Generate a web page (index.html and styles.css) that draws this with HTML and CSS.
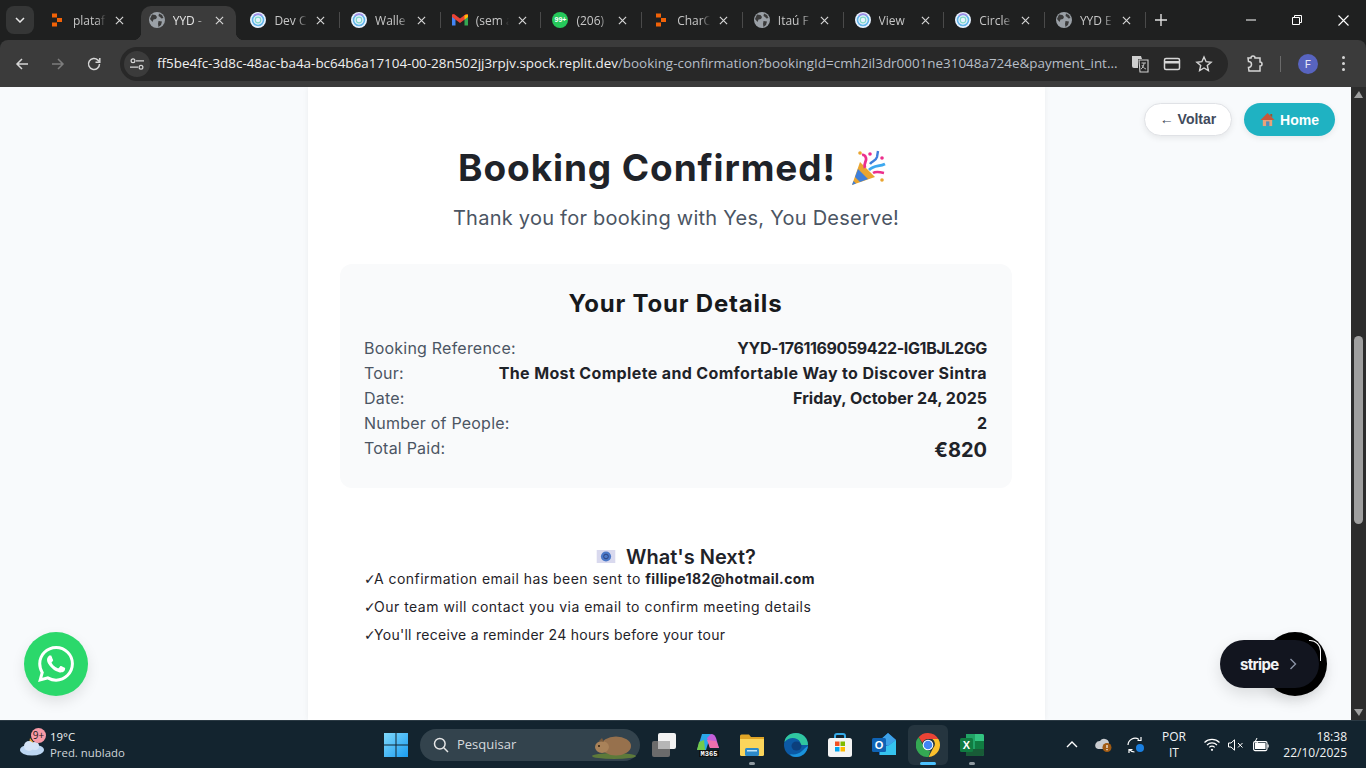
FILE: index.html
```html
<!DOCTYPE html>
<html lang="en">
<head>
    <meta charset="UTF-8">
    <meta name="viewport" content="width=device-width, initial-scale=1.0">
    <title>Booking Confirmed</title>
    <link rel="stylesheet" href="styles.css">
</head>
<body>
    <svg class="defs" width="0" height="0">
        <symbol id="i-close" viewBox="0 0 10 10"><path d="M1 1l8 8M9 1l-8 8" stroke="#d6d6d6" stroke-width="1.3" fill="none"/></symbol>
        <symbol id="i-globe" viewBox="0 0 16 16"><circle cx="8" cy="8" r="8" fill="#9aa0a6"/><path d="M3 2.500l3.500.5 1.500 2-1 2-2.500.5-1 2.500-2.500-3zM10 1.500l3 1.500 1.500 3-2 .5-1.500-1.500-1.500-1zM9.500 9l3.500.5-1 3.500-2.500 2-.5-3z" fill="#3b3b3b"/></symbol>
        <symbol id="i-circle" viewBox="0 0 16 16"><circle cx="8" cy="8" r="8" fill="#e8f2ff"/><circle cx="8" cy="8" r="5.500" fill="none" stroke="#62b5ea" stroke-width="1.600"/><path d="M4 3.800a5.500 5.500 0 0 1 8-.2" fill="none" stroke="#a78be8" stroke-width="1.600"/><circle cx="8" cy="8" r="2.800" fill="none" stroke="#7fd8c8" stroke-width="1.200"/></symbol>
        <symbol id="i-replit" viewBox="0 0 16 16"><path d="M3 1.500h5v4H3zM8 6h5v4H8zM3 10.500h5v4H3z" fill="#f26207"/></symbol>
    </svg>

    <div class="tabstrip">
        <button class="tab-search"><svg width="10" height="6" viewBox="0 0 10 6"><path d="M1 1l4 4 4-4" stroke="#e8e8e8" stroke-width="1.500" fill="none"/></svg></button>
        <div class="tabs">
            <div class="tab no-sep"><svg class="favicon"><use href="#i-replit"/></svg><span class="tab-title">plataf</span><svg class="tab-x"><use href="#i-close"/></svg></div>
            <div class="tab active"><svg class="favicon"><use href="#i-globe"/></svg><span class="tab-title">YYD -</span><svg class="tab-x"><use href="#i-close"/></svg></div>
            <div class="tab"><svg class="favicon"><use href="#i-circle"/></svg><span class="tab-title">Dev C</span><svg class="tab-x"><use href="#i-close"/></svg></div>
            <div class="tab"><svg class="favicon"><use href="#i-circle"/></svg><span class="tab-title">Walle</span><svg class="tab-x"><use href="#i-close"/></svg></div>
            <div class="tab"><svg class="favicon" viewBox="0 0 16 16"><path d="M0 4v9.500h3.500V7z" fill="#4285f4"/><path d="M16 4v9.500h-3.500V7z" fill="#34a853"/><path d="M0 2.500v2.500l8 6 8-6V2.500l-2-.5-6 4.500L2 2z" fill="#ea4335"/><path d="M12.500 3.200L16 2.500V5l-3.500 2.600z" fill="#fbbc04"/></svg><span class="tab-title">(sem a</span><svg class="tab-x"><use href="#i-close"/></svg></div>
            <div class="tab"><span class="wa-fav">99+</span><span class="tab-title">(206)</span><svg class="tab-x"><use href="#i-close"/></svg></div>
            <div class="tab"><svg class="favicon"><use href="#i-replit"/></svg><span class="tab-title">CharC</span><svg class="tab-x"><use href="#i-close"/></svg></div>
            <div class="tab"><svg class="favicon"><use href="#i-globe"/></svg><span class="tab-title">Itaú F</span><svg class="tab-x"><use href="#i-close"/></svg></div>
            <div class="tab"><svg class="favicon"><use href="#i-circle"/></svg><span class="tab-title">View</span><svg class="tab-x"><use href="#i-close"/></svg></div>
            <div class="tab"><svg class="favicon"><use href="#i-circle"/></svg><span class="tab-title">Circle</span><svg class="tab-x"><use href="#i-close"/></svg></div>
            <div class="tab"><svg class="favicon"><use href="#i-globe"/></svg><span class="tab-title">YYD E</span><svg class="tab-x"><use href="#i-close"/></svg></div>
        </div>
        <svg class="new-tab" width="12" height="12" viewBox="0 0 12 12"><path d="M6 0v12M0 6h12" stroke="#e0e0e0" stroke-width="1.400"/></svg>
        <div class="win-controls">
            <svg width="10" height="10" viewBox="0 0 10 10"><path d="M0 5h10" stroke="#fff"/></svg>
            <svg width="10" height="10" viewBox="0 0 10 10"><path d="M.5 2.500h7v7h-7zM2.500 2.500v-2h7v7h-2" stroke="#fff" fill="none"/></svg>
            <svg width="11" height="11" viewBox="0 0 11 11"><path d="M.5.500l10 10M10.500.500l-10 10" stroke="#fff" stroke-width="1.100"/></svg>
        </div>
    </div>

    <div class="toolbar">
        <svg class="nav-btn" viewBox="0 0 16 16"><path d="M14 8H3M8 3L3 8l5 5" stroke="#d6d6d6" stroke-width="1.500" fill="none"/></svg>
        <svg class="nav-btn" viewBox="0 0 16 16"><path d="M2 8h11M8 3l5 5-5 5" stroke="#7d7d7d" stroke-width="1.500" fill="none"/></svg>
        <svg class="nav-btn" viewBox="0 0 16 16"><path d="M13.500 8a5.500 5.500 0 1 1-1.600-3.900L13.500 6" stroke="#d6d6d6" stroke-width="1.500" fill="none"/><path d="M13.800 2v4.300H9.500" stroke="#d6d6d6" stroke-width="1.500" fill="none"/></svg>
        <div class="omnibox">
            <span class="site-info"><svg width="14" height="12" viewBox="0 0 14 12"><circle cx="3" cy="2.800" r="1.900" fill="none" stroke="#d6d6d6" stroke-width="1.200"/><path d="M6 2.800h8M0 9.200h8" stroke="#d6d6d6" stroke-width="1.200"/><circle cx="11" cy="9.200" r="1.900" fill="none" stroke="#d6d6d6" stroke-width="1.200"/></svg></span>
            <span class="url"><span class="url-host">ff5be4fc-3d8c-48ac-ba4a-bc64b6a17104-00-28n502jj3rpjv.spock.replit.dev</span>/booking-confirmation?bookingId=cmh2il3dr0001ne31048a724e&amp;payment_int...</span>
            <svg class="omni-icon" viewBox="0 0 18 18"><path d="M1 1h9l1 3h-4v9H3a2 2 0 0 1-2-2z" fill="#cfcfcf"/><path d="M8 5h9v12H9z" fill="none" stroke="#cfcfcf" stroke-width="1.100"/><path d="M10.500 8h4.500M13 8c0 3-1.500 5-3 6M11 10c.5 2 2.500 3.500 4 4" stroke="#cfcfcf" stroke-width=".9" fill="none"/></svg>
            <svg class="omni-icon" viewBox="0 0 18 18"><rect x="1.500" y="3.500" width="15" height="11" rx="1.500" fill="none" stroke="#d6d6d6" stroke-width="1.500"/><path d="M1.500 6h15v2.500h-15z" fill="#d6d6d6"/></svg>
            <svg class="omni-icon" viewBox="0 0 18 18"><path d="M9 2l2.100 4.700 5 .5-3.800 3.300 1.100 5L9 13l-4.400 2.500 1.100-5L1.900 7.200l5-.5z" fill="none" stroke="#d6d6d6" stroke-width="1.400"/></svg>
        </div>
        <svg class="ext-icon" viewBox="0 0 18 18"><path d="M2 3h3a2 2 0 0 1 4 0h5v4a2 2 0 0 1 0 4v5H3l-.5-3.500a2 2 0 0 0 0-6z" fill="none" stroke="#d6d6d6" stroke-width="1.500"/></svg>
        <span class="toolbar-sep"></span>
        <span class="avatar">F</span>
        <span class="kebab"><i></i><i></i><i></i></span>
    </div>

    <div class="viewport">
        <main class="page">
            <div class="card">
                <h1 class="title">Booking Confirmed! <svg class="party" viewBox="0 0 36 36"><path d="M1 35l8-23 15 15z" fill="#e9a530"/><path d="M4 27l3-8 10 10-8 3zM1 35l1.500-4 2.500 2.500z" fill="#3f7fd9"/><path d="M14 18c-2-5 2-6 1-10S11 5 11 5" stroke="#ec2f8c" stroke-width="2.800" fill="none"/><path d="M18 20c5-5 10-3 16-6" stroke="#3da8ef" stroke-width="2.800" fill="none"/><path d="M19 14c2-3 6-3 7-7l1-6" stroke="#3d7fdc" stroke-width="2.400" fill="none"/><path d="M22 23c3-2 7-1 11 0" stroke="#ec2f8c" stroke-width="2.400" fill="none"/><circle cx="9" cy="3" r="1.800" fill="#e9a530"/><circle cx="19" cy="4" r="1.800" fill="#ec2f8c"/><circle cx="31" cy="30" r="1.800" fill="#e9a530"/><circle cx="31" cy="8" r="1.800" fill="#ec2f8c"/></svg></h1>
                <p class="subtitle">Thank you for booking with Yes, You Deserve!</p>

                <section class="details">
                    <h2 class="details-title">Your Tour Details</h2>
                    <div class="row"><span>Booking Reference:</span><strong class="ref">YYD-1761169059422-IG1BJL2GG</strong></div>
                    <div class="row"><span>Tour:</span><strong class="tour">The Most Complete and Comfortable Way to Discover Sintra</strong></div>
                    <div class="row"><span>Date:</span><strong>Friday, October 24, 2025</strong></div>
                    <div class="row"><span>Number of People:</span><strong>2</strong></div>
                    <div class="row"><span>Total Paid:</span><strong class="total">€820</strong></div>
                </section>

                <section class="next">
                    <h3 class="next-title"><svg class="mail-icon" viewBox="0 0 20 14"><path d="M0 0h20v14H0z" fill="#d9d9ee"/><circle cx="10" cy="7" r="5.500" fill="#4a78c8"/><circle cx="10" cy="7" r="2.500" fill="none" stroke="#2b3f7a"/></svg>What's Next?</h3>
                    <ul class="next-list">
                        <li>A confirmation email has been sent to <strong>fillipe182@hotmail.com</strong></li>
                        <li class="wide">Our team will contact you via email to confirm meeting details</li>
                        <li class="tight">You'll receive a reminder 24 hours before your tour</li>
                    </ul>
                </section>
            </div>

            <div class="top-actions">
                <a class="btn-back">← Voltar</a>
                <a class="btn-home"><svg class="house" viewBox="0 0 16 16"><path d="M3 8h10v7H3z" fill="#e8a27a"/><path d="M8 1L.5 8.500h15z" fill="#c9573a"/><path d="M6.500 10h3.500v5H6.500z" fill="#4a90c2"/><path d="M11 2h2v3.500l-2-2z" fill="#a0522d"/></svg>Home</a>
            </div>

            <div class="whatsapp"><svg width="36" height="36" viewBox="0 0 24 24"><path fill="#fff" d="M17.472 14.382c-.297-.149-1.758-.867-2.03-.967-.273-.099-.471-.148-.67.15-.197.297-.767.966-.94 1.164-.173.199-.347.223-.644.075-.297-.15-1.255-.463-2.39-1.475-.883-.788-1.48-1.761-1.653-2.059-.173-.297-.018-.458.13-.606.134-.133.298-.347.446-.52.149-.174.198-.298.298-.497.099-.198.05-.371-.025-.52-.075-.149-.669-1.612-.916-2.207-.242-.579-.487-.5-.669-.51-.173-.008-.371-.01-.57-.01-.198 0-.52.074-.792.372-.272.297-1.04 1.016-1.04 2.479 0 1.462 1.065 2.875 1.213 3.074.149.198 2.096 3.2 5.077 4.487.709.306 1.262.489 1.694.625.712.227 1.36.195 1.871.118.571-.085 1.758-.719 2.006-1.413.248-.694.248-1.289.173-1.413-.074-.124-.272-.198-.57-.347m-5.421 7.403h-.004a9.87 9.87 0 01-5.031-1.378l-.361-.214-3.741.982.998-3.648-.235-.374a9.86 9.86 0 01-1.51-5.26c.001-5.45 4.436-9.884 9.888-9.884 2.64 0 5.122 1.03 6.988 2.898a9.825 9.825 0 012.893 6.994c-.003 5.45-4.437 9.884-9.885 9.884m8.413-18.297A11.815 11.815 0 0012.05 0C5.495 0 .16 5.335.157 11.892c0 2.096.547 4.142 1.588 5.945L.057 24l6.305-1.654a11.882 11.882 0 005.683 1.448h.005c6.554 0 11.89-5.335 11.893-11.893a11.821 11.821 0 00-3.48-8.413z"/></svg></div>

            <div class="chat-disc"></div>
            <div class="stripe-badge"><span class="stripe-word">stripe</span><svg width="8" height="12" viewBox="0 0 8 12"><path d="M1.500 1l5 5-5 5" stroke="#8a93a6" stroke-width="1.400" fill="none"/></svg></div>
        </main>
        <div class="scrollbar">
            <span class="arrow-up"></span>
            <span class="thumb"></span>
            <span class="arrow-down"></span>
        </div>
    </div>

    <footer class="taskbar">
        <div class="weather">
            <svg class="weather-icon" viewBox="0 0 26 22"><path d="M3 11l7-1 1-6 4 5z" fill="#f0a22e"/><ellipse cx="13" cy="16" rx="12" ry="5.500" fill="#bcd6f2"/><circle cx="10" cy="12" r="5" fill="#d5e4f6"/><circle cx="16" cy="12" r="4" fill="#d5e4f6"/></svg>
            <span class="weather-badge">9+</span>
            <div class="weather-text"><span>19°C</span><span class="weather-sub">Pred. nublado</span></div>
        </div>
        <div class="task-item win-logo"><svg width="24" height="24" viewBox="0 0 24 24"><defs><linearGradient id="w" x1="0" y1="0" x2="1" y2="1"><stop offset="0" stop-color="#7fd8fb"/><stop offset="1" stop-color="#1a9cf0"/></linearGradient></defs><path d="M0 0h11.500v11.500H0zM12.500 0H24v11.500H12.500zM0 12.500h11.500V24H0zM12.500 12.500H24V24H12.500z" fill="url(#w)"/></svg></div>
        <div class="search-pill">
            <svg width="16" height="16" viewBox="0 0 16 16"><circle cx="6.800" cy="6.800" r="5.300" fill="none" stroke="#e6e6e6" stroke-width="1.500"/><path d="M10.800 10.800L15 15" stroke="#e6e6e6" stroke-width="1.500"/></svg>
            <span>Pesquisar</span>
            <svg class="search-art" width="46" height="28" viewBox="0 0 46 28"><ellipse cx="23" cy="25" rx="22" ry="3" fill="#5d7a3a"/><ellipse cx="25" cy="15" rx="15" ry="9.500" fill="#97714d"/><ellipse cx="11" cy="16" rx="7" ry="6" fill="#a98259"/><circle cx="8" cy="15" r="1" fill="#2a1c10"/><path d="M8 10l3-3 2 4z" fill="#7a5a3c"/></svg>
        </div>
        <div class="task-item"><svg width="24" height="24" viewBox="0 0 24 24"><rect x="0" y="8" width="18" height="16" rx="2" fill="#6b6b6b"/><rect x="6" y="0" width="18" height="16" rx="2" fill="#f2f2f2"/><rect x="6" y="8" width="12" height="8" fill="#b5b5b5"/></svg></div>
        <div class="task-item"><svg width="26" height="26" viewBox="0 0 26 26"><path d="M7 2h9l-5 16H2z" fill="#2aa6e8"/><path d="M16 2c3 0 4 2 5 4l3 10h-9l-3-10z" fill="#c45fd9"/><path d="M4 10l5-2 1 10H2z" fill="#74c94a"/><path d="M12 8l9 1 3 7h-9z" fill="#f06fae"/><rect x="4" y="18" width="20" height="7" fill="#111"/><text class="m365" x="14" y="24" text-anchor="middle">M365</text></svg></div>
        <div class="task-item has-dot"><svg width="24" height="22" viewBox="0 0 24 22"><path d="M0 2a1.500 1.500 0 0 1 1.500-1.500H9L11 3h13v3H0z" fill="#e0a526"/><path d="M0 5h24v15.500a1.500 1.500 0 0 1-1.500 1.500h-21A1.500 1.500 0 0 1 0 20.500z" fill="#fbd55b"/><rect x="5" y="14" width="14" height="8" rx="1.500" fill="#2d8ac9"/><rect x="7" y="16" width="10" height="1.500" fill="#bfe3f7"/></svg></div>
        <div class="task-item"><svg width="24" height="24" viewBox="0 0 24 24"><circle cx="12" cy="12" r="12" fill="#0c59a4"/><path d="M24 12c0-7-5-12-12-12S1 4 .5 9C4 5 9 4 13 6c3 1.500 4 4 3 6h8z" fill="#30c6a0"/><path d="M24 13c-1 7-6 11-12 11-3 0-5-1-6-3 4 1 9 0 12-3 2-2 3-3 6-5z" fill="#1a93dc"/><ellipse cx="12.500" cy="13" rx="5" ry="4.500" fill="#0c3f7d"/></svg></div>
        <div class="task-item"><svg width="24" height="24" viewBox="0 0 24 24"><path d="M7 6V3a2 2 0 0 1 2-2h6a2 2 0 0 1 2 2v3" fill="none" stroke="#35a9e6" stroke-width="2"/><rect x="0" y="5" width="24" height="19" rx="2.500" fill="#f4f4f4"/><rect x="7" y="8.500" width="4.500" height="4.500" fill="#f25022"/><rect x="12.500" y="8.500" width="4.500" height="4.500" fill="#7fba00"/><rect x="7" y="14" width="4.500" height="4.500" fill="#00a4ef"/><rect x="12.500" y="14" width="4.500" height="4.500" fill="#ffb900"/></svg></div>
        <div class="task-item"><svg width="24" height="24" viewBox="0 0 24 24"><path d="M7 8l9-8 8 7v15H7z" fill="#1f6fc4"/><path d="M16 0l8 7-8 6-9-5z" fill="#3ea2e8"/><path d="M8 13l8 0 8-6v15H8z" fill="#35c3ee"/><rect x="0" y="5" width="14" height="14" rx="1.500" fill="#0f63b5"/><text class="outlook-o" x="7" y="16" text-anchor="middle">O</text></svg></div>
        <div class="task-item active-app"><svg width="24" height="24" viewBox="0 0 24 24"><path d="M12 0a12 12 0 0 1 10.400 6H12a6 6 0 0 0-5.600 3.800L2.600 4.300A12 12 0 0 1 12 0z" fill="#ea4335"/><path d="M22.400 6A12 12 0 0 1 12.500 24l4.700-8.900a6 6 0 0 0-.9-9.100z" fill="#fbc02d"/><path d="M12.500 24A12 12 0 0 1 2.600 4.300l4.800 8.300a6 6 0 0 0 7 5z" fill="#34a853"/><circle cx="12" cy="12" r="5.300" fill="#fff"/><circle cx="12" cy="12" r="4.300" fill="#4285f4"/></svg></div>
        <div class="task-item has-dot"><svg width="24" height="24" viewBox="0 0 24 24"><path d="M6 1h16a2 2 0 0 1 2 2v18a2 2 0 0 1-2 2H6z" fill="#21a366"/><path d="M15 1h7a2 2 0 0 1 2 2v5h-9z" fill="#33c481"/><path d="M6 16h18v5a2 2 0 0 1-2 2H6z" fill="#185c37"/><path d="M15 8h9v8h-9z" fill="#107c41"/><rect x="0" y="5" width="13" height="14" rx="1.500" fill="#107c41"/><text class="excel-x" x="6.500" y="16" text-anchor="middle">X</text></svg></div>

        <div class="tray">
            <svg class="tray-chevron" width="12" height="7" viewBox="0 0 12 7"><path d="M1 6l5-5 5 5" stroke="#fff" stroke-width="1.400" fill="none"/></svg>
            <svg class="tray-cloud" width="18" height="16" viewBox="0 0 18 16"><path d="M1 11a4.500 4.500 0 0 1 4-7 5 5 0 0 1 9 2v6H3z" fill="#c9ccd0"/><circle cx="12" cy="10.500" r="4.500" fill="#a05a12"/><path d="M12 8v3M12 12v1.200" stroke="#fff" stroke-width="1.200"/></svg>
            <svg class="tray-sync" width="18" height="18" viewBox="0 0 18 18"><path d="M1 9a7 7 0 0 1 11-5.500M14 1v3.500h-3.500M2 17v-3.500h3.500M2.500 13.500a7 7 0 0 0 5 2.500" stroke="#fff" stroke-width="1.200" fill="none"/><circle cx="13" cy="12" r="4" fill="#1a7fe0"/></svg>
            <div class="tray-lang"><span>POR</span><span>IT</span></div>
            <svg class="tray-wifi" width="16" height="13" viewBox="0 0 16 13"><path d="M.5 4.500a10.500 10.500 0 0 1 15 0M3 7a7 7 0 0 1 10 0M5.300 9.300a3.800 3.800 0 0 1 5.400 0" stroke="#fff" stroke-width="1.100" fill="none"/><circle cx="8" cy="11.800" r="1.100" fill="#fff"/></svg>
            <svg class="tray-sound" width="16" height="12" viewBox="0 0 16 12"><path d="M.5 4h2.500L6.500.8v10.400L3 8H.5zM10 4l4.500 4.500M14.500 4L10 8.500" stroke="#fff" fill="none"/></svg>
            <svg class="tray-battery" width="16" height="14" viewBox="0 0 16 14"><rect x=".6" y="3.600" width="13.400" height="9" rx="1.500" fill="none" stroke="#fff" stroke-width="1.100"/><rect x="2" y="5" width="10.500" height="6" fill="#fff"/><path d="M14.500 6.500h1.200v3h-1.200z" fill="#fff"/><path d="M4 0L2 4h2.500L3.500 7" stroke="#fff" fill="none"/></svg>
            <div class="clock"><span>18:38</span><span>22/10/2025</span></div>
        </div>
    </footer>
</body>
</html>
```

FILE: styles.css
```css
* {
    box-sizing: border-box;
}
html, body {
    margin: 0;
    height: 768px;
    overflow: hidden;
}
body {
    display: flex;
    flex-direction: column;
    width: 1366px;
    font-family: "Inter", "Liberation Sans", sans-serif;
    background-color: #1f2020;
}
.defs {
    position: absolute;
}

/* browser tabs */
.tabstrip {
    display: flex;
    align-items: center;
    height: 40px;
    flex: none;
    background-color: #1f2020;
    font-family: "Open Sans", "Liberation Sans", sans-serif;
}
.tab-search {
    flex: none;
    display: flex;
    align-items: center;
    justify-content: center;
    width: 28px;
    height: 28px;
    margin: 0 6px;
    background-color: #353636;
    border: none;
    border-radius: 8px;
}
.tabs {
    display: flex;
    height: 34px;
    align-self: flex-end;
}
.tab {
    position: relative;
    display: flex;
    align-items: center;
    width: 100.7px;
    padding: 0 0 6px 9px;
    color: #c7c7c7;
    font-size: 12px;
}
.tab::after {
    content: "";
    position: absolute;
    right: 2px;
    top: 6px;
    height: 16px;
    border-right: 1px solid #4a4a4a;
}
.tab.no-sep::after {
    display: none;
}
.tab.active {
    width: 95px;
    margin-right: 5.7px;
    padding-left: 8px;
    background-color: #3b3b3b;
    border-radius: 10px 10px 0 0;
    color: #e3e3e3;
}
.tab.active::before, .tab.active::after {
    content: "";
    position: absolute;
    top: auto;
    bottom: 0;
    width: 8px;
    height: 8px;
    border: none;
}
.tab.active::before {
    left: -8px;
    background: radial-gradient(circle at 0 0, transparent 8px, #3b3b3b 8.5px);
}
.tab.active::after {
    right: -8px;
    background: radial-gradient(circle at 100% 0, transparent 8px, #3b3b3b 8.5px);
}
.favicon {
    flex: none;
    width: 16px;
    height: 16px;
}
.wa-fav {
    flex: none;
    width: 16px;
    height: 16px;
    border-radius: 50%;
    background-color: #25c85a;
    color: #fff;
    font-size: 7px;
    font-weight: 700;
    line-height: 16px;
    text-align: center;
    font-family: "Liberation Sans", sans-serif;
}
.tab-title {
    flex: none;
    width: 33px;
    margin-left: 8px;
    white-space: nowrap;
    -webkit-mask-image: linear-gradient(to right, #000 72%, transparent);
    mask-image: linear-gradient(to right, #000 72%, transparent);
}
.tab-x {
    flex: none;
    width: 9px;
    height: 9px;
    margin-left: 9px;
}
.new-tab {
    flex: none;
    margin-left: 7px;
}
.win-controls {
    display: flex;
    align-items: center;
    gap: 36px;
    margin-left: auto;
    margin-right: 17px;
}

/* address bar */
.toolbar {
    display: flex;
    align-items: center;
    flex: none;
    height: 47px;
    padding: 0 12px 0 14px;
    background-color: #3b3b3b;
    border-radius: 8px 8px 0 0;
}
.nav-btn {
    flex: none;
    width: 16px;
    height: 16px;
    margin-right: 20px;
}
.omnibox {
    display: flex;
    align-items: center;
    flex: none;
    width: 1108px;
    height: 34px;
    margin-left: -2px;
    padding-left: 4px;
    background-color: #282828;
    border-radius: 17px;
    color: #b7bec7;
    font-family: "Open Sans", "Liberation Sans", sans-serif;
    font-size: 13.43px;
}
.site-info {
    display: flex;
    align-items: center;
    justify-content: center;
    flex: none;
    width: 26px;
    height: 26px;
    border-radius: 50%;
    background-color: #3b3b3b;
}
.url {
    flex: none;
    width: 960px;
    margin-left: 7px;
    margin-right: 14px;
    padding-bottom: 2px;
    white-space: nowrap;
}
.url-host {
    color: #f0f0f0;
}
.omni-icon {
    flex: none;
    width: 18px;
    height: 18px;
    margin-right: 14px;
}
.ext-icon {
    flex: none;
    width: 18px;
    height: 18px;
    margin-left: 18px;
}
.toolbar-sep {
    flex: none;
    height: 16px;
    margin-left: 16px;
    border-left: 1px solid #6a6a6a;
}
.avatar {
    flex: none;
    width: 20px;
    height: 20px;
    margin-left: 17px;
    border-radius: 50%;
    background-color: #5864c0;
    color: #e6e8f8;
    font-size: 11px;
    line-height: 20px;
    text-align: center;
}
.kebab {
    display: flex;
    flex-direction: column;
    gap: 3px;
    margin-left: 24px;
}
.kebab i {
    width: 3px;
    height: 3px;
    border-radius: 50%;
    background-color: #d6d6d6;
}

/* page */
.viewport {
    display: flex;
    flex: none;
    height: 633px;
}
.page {
    position: relative;
    width: 1351px;
    height: 633px;
    overflow: hidden;
    background-color: #f8fafc;
}
.card {
    width: 737px;
    height: 633px;
    margin-left: 308px;
    padding: 56px 33px 0 32px;
    background-color: #fff;
    box-shadow: 0 0 6px rgba(0, 0, 0, 0.06);
    color: #1f2329;
}
.title {
    display: flex;
    align-items: center;
    justify-content: center;
    gap: 15px;
    margin: 0;
    height: 50px;
    padding-right: 7px;
    font-size: 37px;
    font-weight: 700;
    line-height: 50px;
    letter-spacing: 0.9px;
}
.party {
    width: 36px;
    height: 36px;
}
.subtitle {
    margin: 9px 0 0;
    height: 32px;
    color: #4b5563;
    font-size: 20px;
    line-height: 32px;
    letter-spacing: 0.25px;
    text-align: center;
}
.details {
    height: 224px;
    margin-top: 30px;
    padding: 24px 25px 0 24px;
    background-color: #f9fafb;
    border-radius: 12px;
}
.details-title {
    margin: 0 0 16px;
    height: 32px;
    color: #17191c;
    font-size: 24px;
    font-weight: 700;
    line-height: 32px;
    letter-spacing: 0.8px;
    text-align: center;
}
.row {
    display: flex;
    justify-content: space-between;
    height: 25px;
    color: #4b5563;
    font-size: 16px;
    line-height: 25px;
}
.row span {
    letter-spacing: 0.22px;
}
.row strong {
    color: #1f2329;
    font-weight: 700;
}
.row .ref {
    letter-spacing: -0.37px;
}
.row .tour {
    letter-spacing: 0.36px;
}
.row .total {
    font-size: 20px;
    line-height: 28px;
}
.next {
    margin-top: 57px;
    padding: 0 24px;
}
.next-title {
    display: flex;
    align-items: center;
    justify-content: center;
    margin: 0;
    height: 23px;
    color: #1f2329;
    font-size: 20px;
    font-weight: 600;
}
.mail-icon {
    width: 20px;
    height: 13px;
    margin-right: 10px;
}
.next-list {
    margin: 0;
    padding: 0;
    list-style: none;
    font-size: 14px;
    letter-spacing: 0.46px;
    color: #1f2329;
}
.next-list li {
    height: 28px;
    line-height: 22px;
}
.next-list .wide {
    letter-spacing: 0.49px;
}
.next-list .tight {
    letter-spacing: 0.28px;
}
.next-list li::before {
    content: "✓";
    display: inline-block;
    width: 10px;
    font-family: "DejaVu Sans", sans-serif;
    font-size: 14px;
    letter-spacing: 0;
}
.next-list strong {
    font-weight: 700;
    letter-spacing: 0.4px;
}

/* floating stuff over the page */
.top-actions {
    position: absolute;
    top: 16px;
    right: 16px;
    display: flex;
    gap: 12px;
    font-family: "Liberation Sans", sans-serif;
    font-size: 14px;
    font-weight: 700;
}
.btn-back {
    width: 88px;
    height: 33px;
    border: 1px solid #e0e2e6;
    border-radius: 17px;
    background-color: #fff;
    box-shadow: 0 2px 6px rgba(0, 0, 0, 0.08);
    color: #414a5c;
    line-height: 31px;
    text-align: center;
}
.btn-home {
    display: flex;
    align-items: center;
    justify-content: center;
    gap: 5px;
    width: 91px;
    height: 33px;
    border-radius: 17px;
    background-color: #1fb2c2;
    box-shadow: 0 2px 6px rgba(0, 0, 0, 0.08);
    color: #fff;
}
.house {
    width: 15px;
    height: 15px;
}
.whatsapp {
    position: absolute;
    left: 24px;
    top: 545px;
    display: flex;
    align-items: center;
    justify-content: center;
    width: 64px;
    height: 64px;
    border-radius: 50%;
    background-color: #2bd86b;
    box-shadow: 0 6px 14px rgba(0, 0, 0, 0.1);
}
.chat-disc {
    position: absolute;
    left: 1263px;
    top: 545px;
    width: 64px;
    height: 64px;
    border-radius: 50%;
    background-color: #000;
    box-shadow: 0 6px 14px rgba(0, 0, 0, 0.1);
}
.chat-disc::after {
    content: "";
    position: absolute;
    left: 46px;
    top: 8px;
    width: 11px;
    height: 20px;
    border-top: 1px solid #fff;
    border-right: 1px solid #fff;
    border-top-right-radius: 11px;
}
.stripe-badge {
    position: absolute;
    left: 1220px;
    top: 553px;
    display: flex;
    align-items: center;
    gap: 11px;
    width: 99px;
    height: 48px;
    padding-left: 20px;
    border-radius: 24px;
    background-color: #12151f;
    box-shadow: 0 6px 16px rgba(0, 0, 0, 0.12);
}
.stripe-word {
    color: #f2f3f5;
    font-size: 15px;
    font-weight: 700;
    letter-spacing: -0.7px;
}

/* scrollbar */
.scrollbar {
    position: relative;
    flex: none;
    width: 15px;
    background-color: #2c2c2c;
}
.thumb {
    position: absolute;
    left: 3px;
    top: 249px;
    width: 9px;
    height: 188px;
    border-radius: 5px;
    background-color: #9f9f9f;
}
.arrow-up, .arrow-down {
    position: absolute;
    left: 3px;
    border-left: 5px solid transparent;
    border-right: 4px solid transparent;
}
.arrow-up {
    top: 4px;
    border-bottom: 7px solid #9f9f9f;
}
.arrow-down {
    bottom: 4px;
    border-top: 7px solid #9f9f9f;
}

/* windows taskbar */
.taskbar {
    display: flex;
    align-items: center;
    flex: none;
    height: 48px;
    background-color: #13242f;
    border-top: 1px solid #2b3a44;
    color: #f2f4f5;
    font-family: "Open Sans", "Liberation Sans", sans-serif;
    font-size: 12px;
}
.weather {
    position: relative;
    display: flex;
    align-items: center;
    flex: none;
    width: 374px;
    padding-left: 19px;
}
.weather-icon {
    flex: none;
    width: 26px;
    height: 22px;
}
.weather-badge {
    position: absolute;
    left: 31px;
    top: -1px;
    width: 15px;
    height: 15px;
    border-radius: 50%;
    background-color: #f79aa6;
    color: #1a1a1a;
    font-size: 10px;
    line-height: 15px;
    text-align: center;
}
.weather-text {
    display: flex;
    flex-direction: column;
    margin-left: 5px;
    font-size: 11.4px;
    line-height: 16px;
}
.weather-sub {
    color: #cfd5d9;
}
.task-item {
    position: relative;
    display: flex;
    align-items: center;
    justify-content: center;
    flex: none;
    width: 44px;
    height: 40px;
}
.win-logo {
    margin-right: 2px;
}
.has-dot::after, .active-app::after {
    content: "";
    position: absolute;
    bottom: 0;
    left: 19px;
    width: 6px;
    height: 3px;
    border-radius: 2px;
    background-color: #8f9aa1;
}
.active-app {
    background-color: #25353f;
    border-radius: 6px;
    width: 40px;
    margin: 0 2px;
}
.active-app::after {
    left: 12px;
    width: 16px;
    background-color: #4cc2ff;
}
.m365 {
    fill: #fff;
    font-family: "Liberation Mono", monospace;
    font-size: 7px;
    font-weight: 700;
}
.outlook-o, .excel-x {
    fill: #fff;
    font-family: "Liberation Sans", sans-serif;
    font-size: 11px;
    font-weight: 700;
}
.search-pill {
    display: flex;
    align-items: center;
    flex: none;
    width: 220px;
    height: 32px;
    margin-right: 2px;
    padding-left: 13px;
    border-radius: 16px;
    background-color: #33434d;
    color: #d6dadd;
    font-size: 13px;
}
.search-pill span {
    margin-left: 8px;
    padding-bottom: 2px;
}
.search-art {
    margin-left: auto;
    margin-right: 3px;
}
.tray {
    position: relative;
    display: flex;
    align-items: center;
    flex: 1;
    padding-left: 72px;
}
.tray-cloud {
    margin-left: 17px;
}
.tray-sync {
    margin-left: 14px;
}
.tray-lang {
    display: flex;
    flex-direction: column;
    align-items: center;
    width: 24px;
    margin-left: 17px;
    line-height: 16px;
}
.tray-wifi {
    margin-left: 18px;
}
.tray-sound {
    margin-left: 8px;
}
.tray-battery {
    margin-left: 9px;
}
.clock {
    display: flex;
    flex-direction: column;
    align-items: flex-end;
    margin-left: auto;
    margin-right: 19px;
    line-height: 16px;
}
```
